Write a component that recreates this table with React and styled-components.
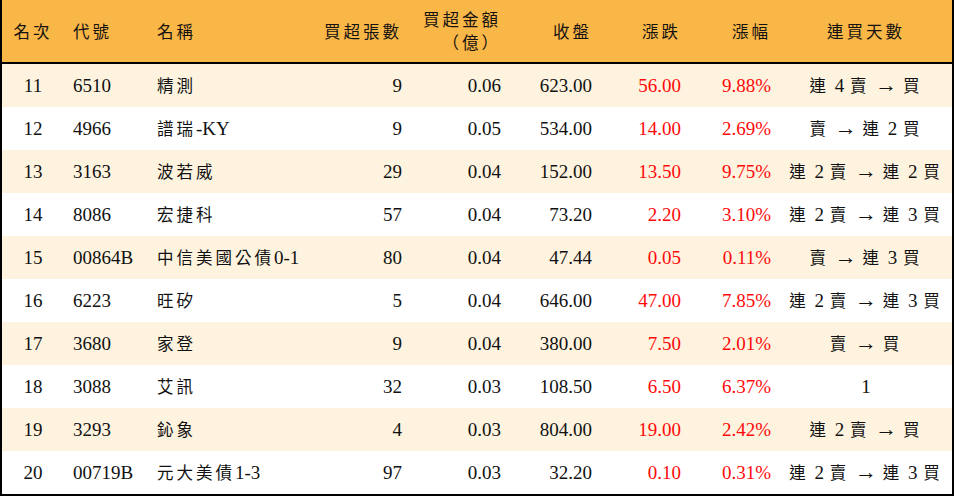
import React from "react";
import styled, { createGlobalStyle } from "styled-components";

const Global = createGlobalStyle`
  html, body { margin: 0; padding: 0; background: #ffffff; }
  body { font-family: "Liberation Serif", "Noto Sans CJK TC", serif; }
`;

const COLS = "62px 84px 172px 91px 99px 91px 89px 90px 172px";

const Board = styled.div`
  width: 954px;
  height: 496px;
  box-sizing: border-box;
  border: 2px solid #000;
  border-top: 0;
  display: flex;
  flex-direction: column;
  color: #111;
`;

const HeaderRow = styled.div`
  display: grid;
  grid-template-columns: ${COLS};
  height: 62px;
  background: #f9b748;
  border-bottom: 2px solid #000;
  align-items: center;
`;

const Row = styled.div`
  display: grid;
  grid-template-columns: ${COLS};
  height: 43px;
  align-items: center;
  background: ${(p) => (p.$shade ? "#fef3df" : "#ffffff")};
`;

const Cell = styled.div`
  display: flex;
  flex-direction: column;
  align-items: ${(p) =>
    p.$align === "left" ? "flex-start" : p.$align === "right" ? "flex-end" : "center"};
  padding: ${(p) =>
    p.$align === "left" ? "0 0 0 9px" : p.$align === "right" ? "0 9px 0 0" : "0"};
  font-family: "Liberation Serif", "Noto Sans CJK TC", serif;
  font-size: 19px;
  line-height: 24px;
  white-space: nowrap;
  color: ${(p) => (p.$red ? "#ff0a0a" : "#111")};
`;

const HeadText = styled.span`
  font-family: "Noto Sans CJK TC", sans-serif;
  font-size: 16.5px;
  font-weight: 400;
  letter-spacing: 3px;
  line-height: 23px;
  color: #151210;
`;

const Cjk = styled.span`
  font-family: "Noto Sans CJK TC", sans-serif;
  font-size: 16.5px;
  letter-spacing: 3px;
`;

const Streak = styled.span`
  font-family: "Liberation Serif", "Noto Sans CJK TC", serif;
  font-size: 19px;
  word-spacing: 1px;
`;

const Arrow = styled.span`
  font-family: "Liberation Serif", serif;
  font-size: 22px;
`;

function Mixed({ text }) {
  const parts = text.split(/([\u3000-\u9fff\uff00-\uffef]+)/).filter(Boolean);
  return parts.map((p, i) =>
    /[\u3000-\u9fff\uff00-\uffef]/.test(p) ? <Cjk key={i}>{p}</Cjk> : <span key={i}>{p}</span>
  );
}

const headers = [
  { t: ["名次"], a: "center" },
  { t: ["代號"], a: "left" },
  { t: ["名稱"], a: "left" },
  { t: ["買超張數"], a: "right" },
  { t: ["買超金額", "（億）"], a: "right" },
  { t: ["收盤"], a: "right" },
  { t: ["漲跌"], a: "right" },
  { t: ["漲幅"], a: "right" },
  { t: ["連買天數"], a: "center" },
];

const rows = [
  ["11", "6510", "精測", "9", "0.06", "623.00", "56.00", "9.88%", "連 4 賣 → 買"],
  ["12", "4966", "譜瑞-KY", "9", "0.05", "534.00", "14.00", "2.69%", "賣 → 連 2 買"],
  ["13", "3163", "波若威", "29", "0.04", "152.00", "13.50", "9.75%", "連 2 賣 → 連 2 買"],
  ["14", "8086", "宏捷科", "57", "0.04", "73.20", "2.20", "3.10%", "連 2 賣 → 連 3 買"],
  ["15", "00864B", "中信美國公債0-1", "80", "0.04", "47.44", "0.05", "0.11%", "賣 → 連 3 買"],
  ["16", "6223", "旺矽", "5", "0.04", "646.00", "47.00", "7.85%", "連 2 賣 → 連 3 買"],
  ["17", "3680", "家登", "9", "0.04", "380.00", "7.50", "2.01%", "賣 → 買"],
  ["18", "3088", "艾訊", "32", "0.03", "108.50", "6.50", "6.37%", "1"],
  ["19", "3293", "鈊象", "4", "0.03", "804.00", "19.00", "2.42%", "連 2 賣 → 買"],
  ["20", "00719B", "元大美債1-3", "97", "0.03", "32.20", "0.10", "0.31%", "連 2 賣 → 連 3 買"],
];

function StreakText({ text }) {
  const parts = text.split(" ");
  return (
    <Streak>
      {parts.map((p, i) => (
        <React.Fragment key={i}>
          {i > 0 ? " " : ""}
          {p === "→" ? <Arrow>→</Arrow> : /[\u3000-\u9fff]/.test(p) ? <Cjk>{p}</Cjk> : p}
        </React.Fragment>
      ))}
    </Streak>
  );
}

export default function App() {
  return (
    <>
      <Global />
      <Board>
        <HeaderRow>
          {headers.map((h, i) => (
            <Cell key={i} $align={h.a}>
              {h.t.map((line, j) => (
                <HeadText key={j}>{line}</HeadText>
              ))}
            </Cell>
          ))}
        </HeaderRow>
        {rows.map((r, i) => (
          <Row key={r[0]} $shade={i % 2 === 0}>
            <Cell $align="center">{r[0]}</Cell>
            <Cell $align="left">{r[1]}</Cell>
            <Cell $align="left">
              <div>
                <Mixed text={r[2]} />
              </div>
            </Cell>
            <Cell $align="right">{r[3]}</Cell>
            <Cell $align="right">{r[4]}</Cell>
            <Cell $align="right">{r[5]}</Cell>
            <Cell $align="right" $red>
              {r[6]}
            </Cell>
            <Cell $align="right" $red>
              {r[7]}
            </Cell>
            <Cell $align="center">
              <StreakText text={r[8]} />
            </Cell>
          </Row>
        ))}
      </Board>
    </>
  );
}
